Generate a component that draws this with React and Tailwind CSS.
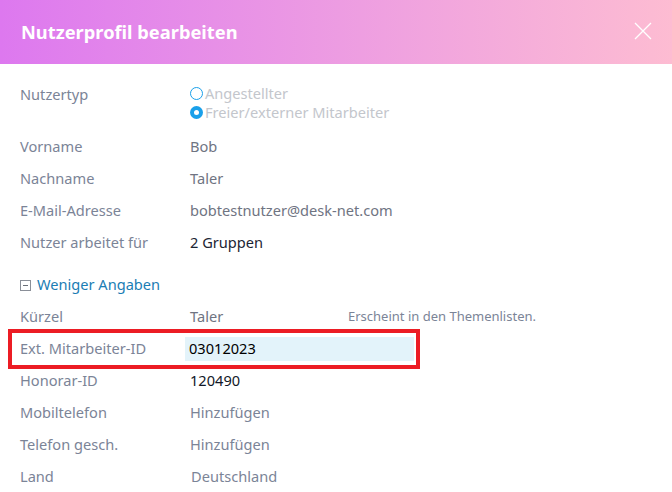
import React from "react";

const font = { fontFamily: "'Noto Sans', 'Open Sans', sans-serif" };

function Row({ label, children, className = "" }) {
  return (
    <div className={`flex items-center h-8 ${className}`}>
      <div className="w-[170px] shrink-0 text-[14.6px] text-[#7b8497]">{label}</div>
      <div className="flex-1 text-[14.6px]">{children}</div>
    </div>
  );
}

export default function App() {
  return (
    <div className="w-[672px] h-[492px] bg-white overflow-hidden" style={font}>
      <div className="h-16 flex items-center justify-between pl-[21px] pr-[20px] bg-gradient-to-r from-[#dd78ef] to-[#fdbcd2]">
        <h1 className="text-[18.3px] font-bold text-white">Nutzerprofil bearbeiten</h1>
        <svg width="18" height="18" viewBox="0 0 18 18" className="mt-[-2px]">
          <path d="M1 1L17 17M17 1L1 17" stroke="white" strokeWidth="1.3" />
        </svg>
      </div>

      <div className="px-5 pt-[16px]">
        <div className="flex items-start h-[51px]">
          <div className="w-[170px] shrink-0 text-[14.6px] text-[#7b8497] pt-[4px]">Nutzertyp</div>
          <div className="flex flex-col text-[14.6px] text-[#c3c6cc] leading-[19px] pt-[4px]">
            <div className="flex items-center gap-[2px]">
              <span className="w-[13px] h-[13px] rounded-full border-[1.5px] border-[#1aa0ea] inline-block" />
              Angestellter
            </div>
            <div className="flex items-center gap-[2px]">
              <span className="w-[13px] h-[13px] rounded-full bg-[#1aa0ea] inline-flex items-center justify-center">
                <span className="w-[5px] h-[5px] rounded-full bg-white" />
              </span>
              Freier/externer Mitarbeiter
            </div>
          </div>
        </div>

        <Row label="Vorname"><span className="text-[#6f7482]">Bob</span></Row>
        <Row label="Nachname"><span className="text-[#6f7482]">Taler</span></Row>
        <Row label="E-Mail-Adresse"><span className="text-[#6f7482]">bobtestnutzer@desk-net.com</span></Row>
        <Row label="Nutzer arbeitet für"><span className="text-[#1c2533]">2 Gruppen</span></Row>

        <div className="flex items-center h-8 mt-[10px] gap-[6px]">
          <span className="w-[11px] h-[11px] border border-[#8a8f98] flex items-center justify-center">
            <span className="w-[5px] h-px bg-[#6a6f78]" />
          </span>
          <span className="text-[14.6px] text-[#1b7db4]">Weniger Angaben</span>
        </div>

        <Row label="Kürzel">
          <div className="flex items-center">
            <span className="w-[158px] text-[#6f7482]">Taler</span>
            <span className="text-[13px] text-[#7b8497]">Erscheint in den Themenlisten.</span>
          </div>
        </Row>

        <div className="-mx-3 -my-1 border-4 border-[#ec1c24] w-[412px] h-10 flex items-center pl-2 pr-[2px]">
          <div className="w-[165px] shrink-0 text-[14.6px] text-[#7b8497]">Ext. Mitarbeiter-ID</div>
          <div className="flex-1 h-6 bg-[#e3f3fa] flex items-center pl-1 text-[14.6px] text-black">03012023</div>
        </div>

        <Row label="Honorar-ID"><span className="text-[#111827]">120490</span></Row>
        <Row label="Mobiltelefon"><span className="text-[#7b8497]">Hinzufügen</span></Row>
        <Row label="Telefon gesch."><span className="text-[#7b8497]">Hinzufügen</span></Row>
        <Row label="Land"><span className="text-[#7b8497] ml-px">Deutschland</span></Row>
      </div>
    </div>
  );
}
